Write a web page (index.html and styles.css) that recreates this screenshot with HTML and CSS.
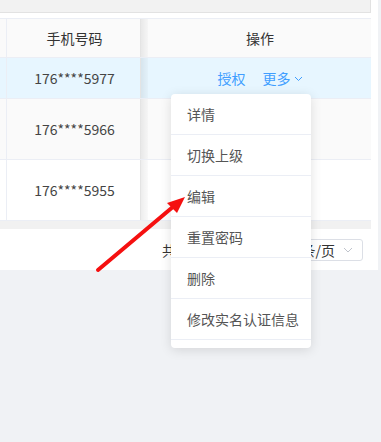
FILE: index.html
```html
<!DOCTYPE html>
<html>
  <head>
    <title>用户列表</title>
    <link rel="stylesheet" href="styles.css">
  </head>
  <body>
    <div class="card">
      <div class="top-strip"></div>

      <div class="table">
        <div class="row head">
          <div class="cell stub"></div>
          <div class="cell phone">手机号码</div>
          <div class="cell ops">操作</div>
        </div>
        <div class="row current">
          <div class="cell stub"></div>
          <div class="cell phone">176****5977</div>
          <div class="cell ops">
            <span class="link">授权</span>
            <span class="link">更多<svg class="chev" width="9" height="6" viewBox="0 0 9 6"><path d="M1 1l3.5 3.5L8 1" fill="none" stroke="currentColor" stroke-width="1"/></svg></span>
          </div>
        </div>
        <div class="row tall striped">
          <div class="cell stub"></div>
          <div class="cell phone">176****5966</div>
          <div class="cell ops"></div>
        </div>
        <div class="row tall">
          <div class="cell stub"></div>
          <div class="cell phone">176****5955</div>
          <div class="cell ops"></div>
        </div>
        <div class="scroll-track"></div>
      </div>

      <div class="pager">
        <span class="total">共 3 条</span>
        <div class="size-select">
          <span>10条/页</span>
          <svg width="10" height="6" viewBox="0 0 10 6"><path d="M1 1l4 4 4-4" fill="none" stroke="#c0c4cc" stroke-width="1"/></svg>
        </div>
      </div>
    </div>

    <ul class="menu">
      <li>详情</li>
      <li>切换上级</li>
      <li>编辑</li>
      <li>重置密码</li>
      <li>删除</li>
      <li>修改实名认证信息</li>
    </ul>

    <svg class="arrow" width="381" height="442" viewBox="0 0 381 442">
      <line x1="98" y1="270" x2="174" y2="206" stroke="#f51010" stroke-width="4" stroke-linecap="round"/>
      <polygon points="185,197 167,203 177,213" fill="#f51010"/>
    </svg>
  </body>
</html>
```

FILE: styles.css
```css
body {
  margin: 0;
  background-color: #f0f2f5;
  font-family: "Noto Sans CJK SC", "Noto Sans", sans-serif;
  font-size: 14px;
  color: #444;
  height: 442px;
  overflow: hidden;
}

.card {
  width: 378px;
  height: 270px;
  background: white;
}

.top-strip {
  width: 370px;
  height: 12px;
  background: #f2f2f2;
  border-right: 1px solid #e2e2e2;
  border-bottom: 1px solid #e2e2e2;
}

.table {
  margin-top: 5px;
  width: 371px;
  border-top: 1px solid #ebeef5;
}

.row {
  display: flex;
  height: 40px;
  border-bottom: 1px solid #ebeef5;
}

.row.head {
  height: 38px;
  background: #fafafa;
  color: #333;
}

.row.current {
  background: #e7f6ff;
}

.row.tall {
  height: 60px;
}

.row.striped {
  background: #fafafa;
}

.cell {
  display: flex;
  align-items: center;
  justify-content: center;
}

.stub {
  width: 6px;
  border-right: 1px solid #ebeef5;
}

.phone {
  width: 133px;
  padding-left: 2px;
  box-sizing: border-box;
}

.ops {
  flex: 1;
  padding-left: 8px;
  gap: 17px;
  border-left: 1px solid #e4e4e4;
  background-image: linear-gradient(to right, rgba(0, 0, 0, 0.07), rgba(0, 0, 0, 0.02) 7px, transparent 7px);
}

.link {
  color: #409eff;
  display: flex;
  align-items: center;
}

.chev {
  margin-left: 3px;
  margin-top: 2px;
}

.scroll-track {
  height: 8px;
  background: #f1f1f1;
}

.pager {
  display: flex;
  align-items: center;
  height: 42px;
  padding-left: 162px;
  color: #333;
}

.total {
  margin-right: 10px;
}

.size-select {
  width: 78px;
  height: 20px;
  margin-left: auto;
  margin-right: 15px;
  border: 1px solid #dcdfe6;
  border-radius: 3px;
  display: flex;
  align-items: center;
  justify-content: flex-end;
  gap: 8px;
  padding-right: 9px;
  box-sizing: content-box;
}

.menu {
  position: absolute;
  left: 171px;
  top: 94px;
  width: 140px;
  margin: 0;
  padding: 0 0 8px;
  list-style: none;
  background: white;
  border-radius: 4px;
  box-shadow: 0 2px 12px rgba(0, 0, 0, 0.12);
}

.menu li {
  height: 40px;
  line-height: 40px;
  padding-left: 16px;
  border-bottom: 1px solid #ebeef5;
  color: #555;
}

.arrow {
  position: absolute;
  left: 0;
  top: 0;
}
```
